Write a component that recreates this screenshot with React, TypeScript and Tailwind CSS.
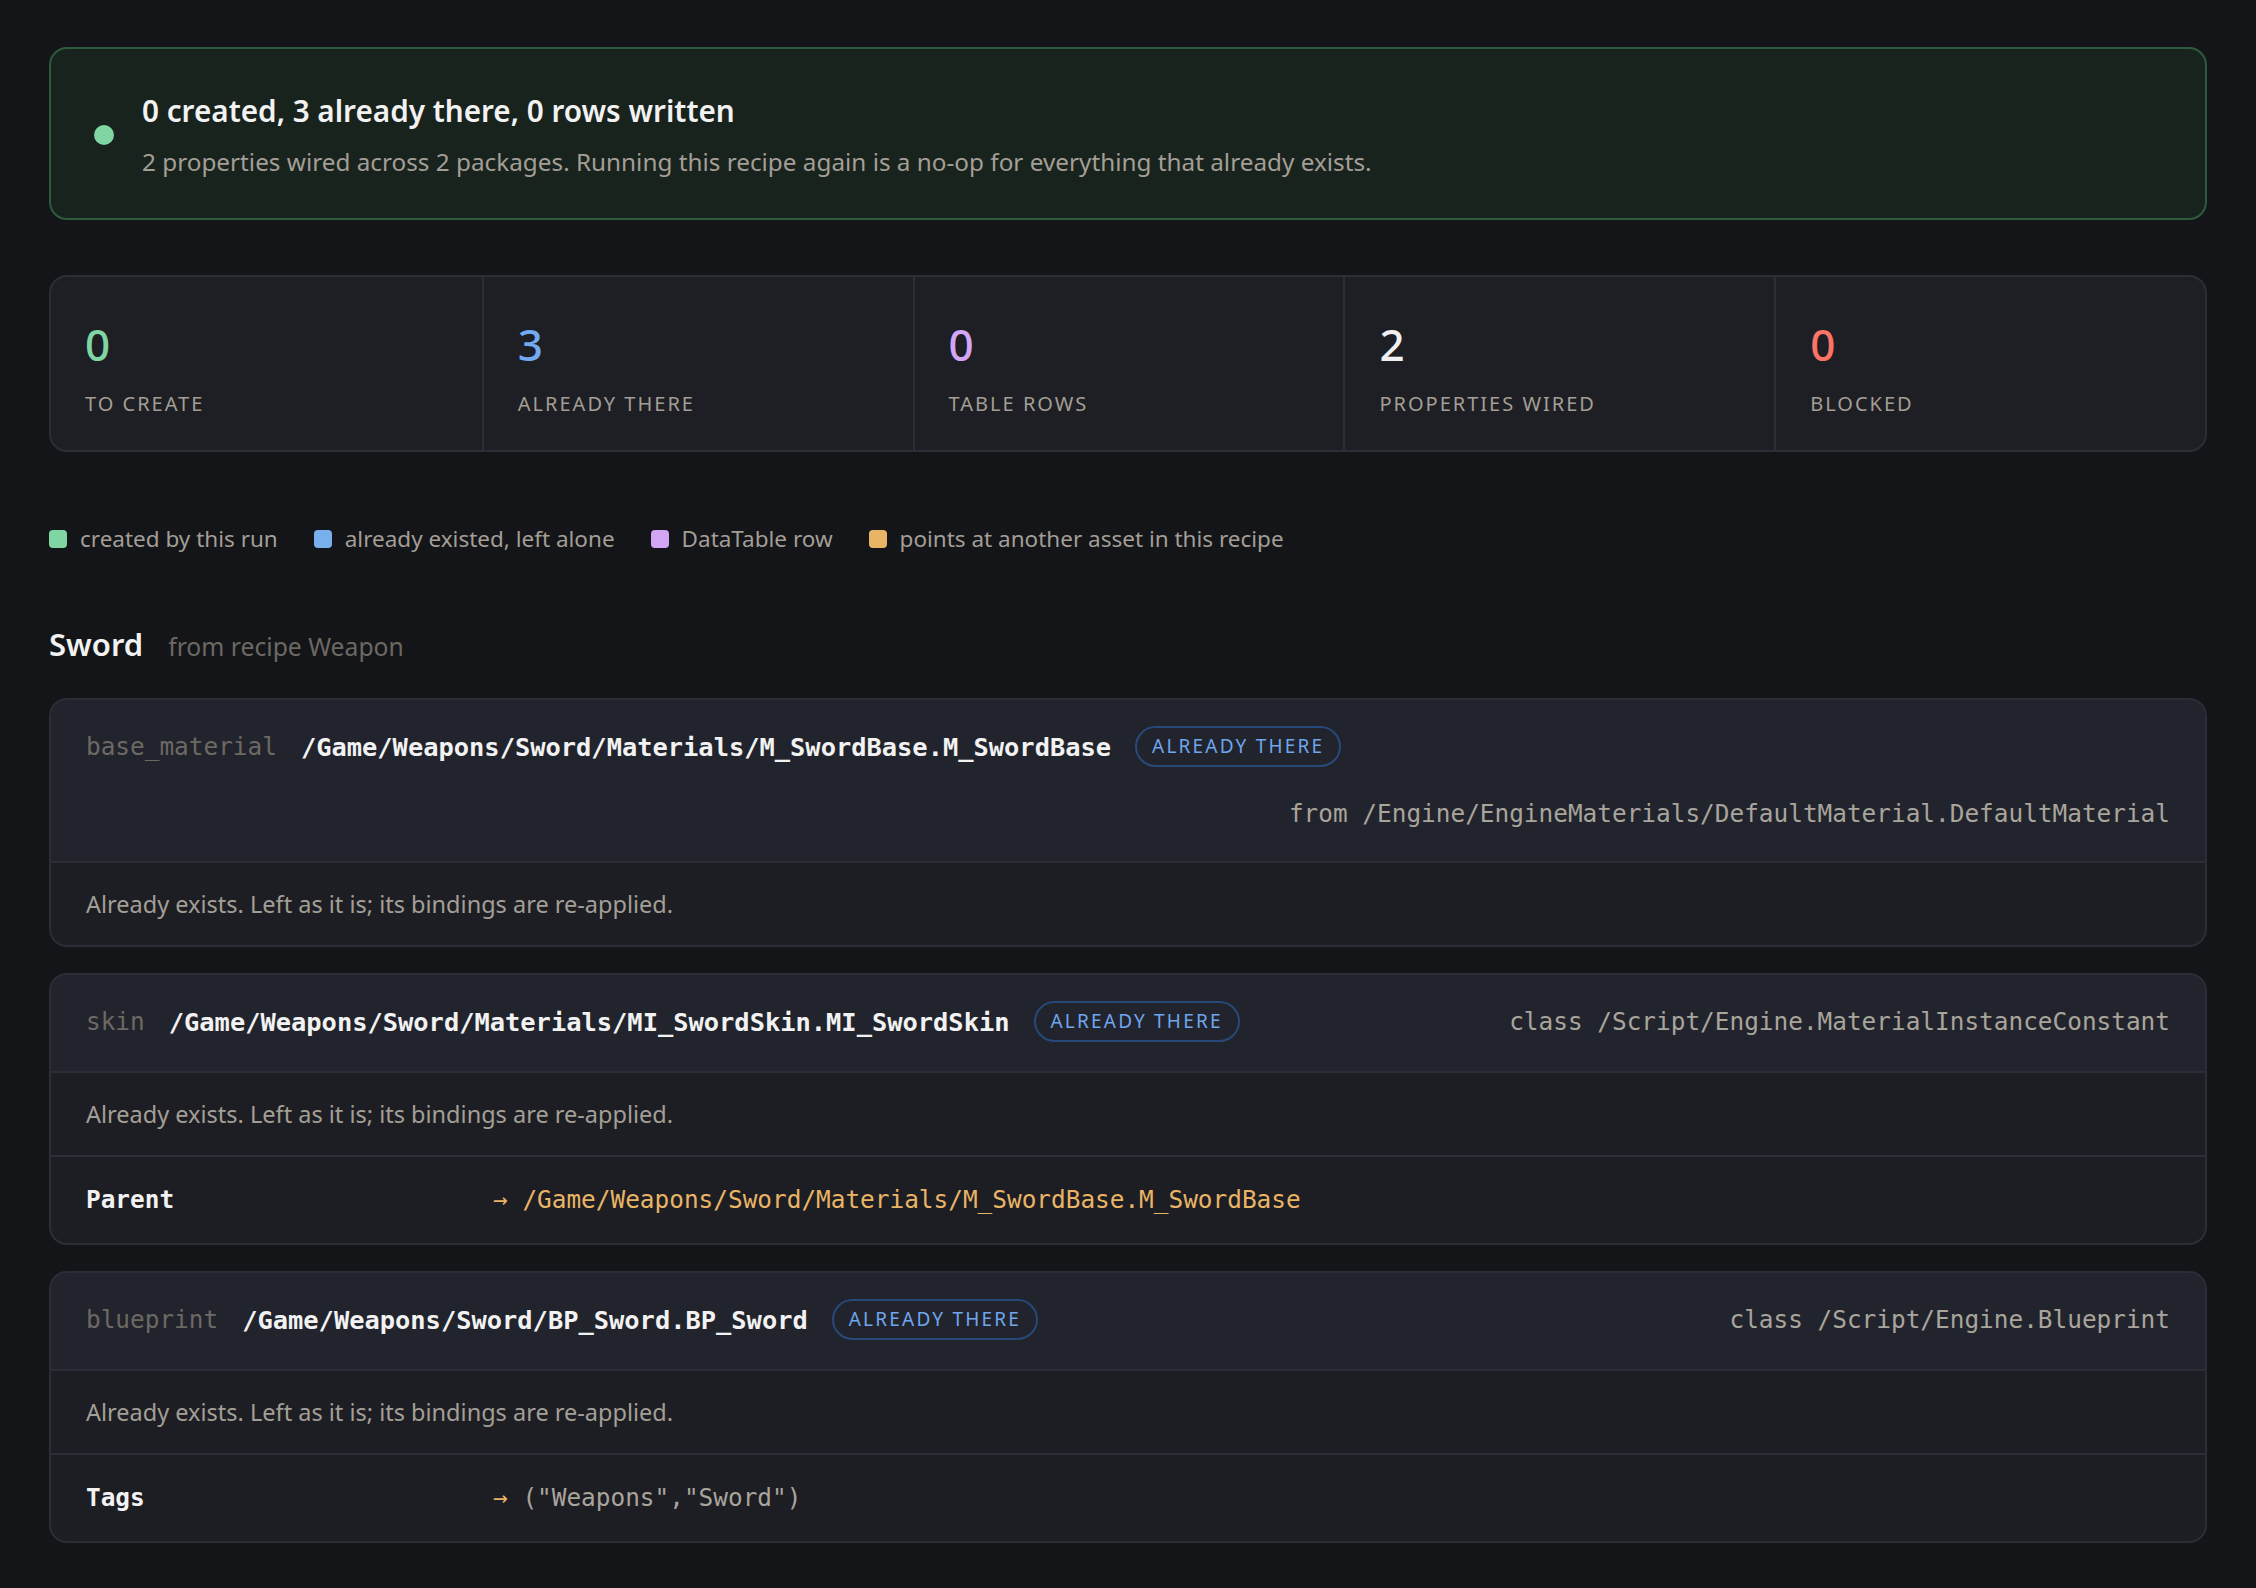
import React from "react";

type Binding = { label: string; arrow: string; value: string; tone: "ref" | "plain" };

type Asset = {
	kind: string;
	path: string;
	meta: string;
	note: string;
	bindings: Binding[];
};

const stats = [
	{ value: "0", label: "TO CREATE", color: "text-[#7fd6a2]" },
	{ value: "3", label: "ALREADY THERE", color: "text-[#72a9f1]" },
	{ value: "0", label: "TABLE ROWS", color: "text-[#d3a6f5]" },
	{ value: "2", label: "PROPERTIES WIRED", color: "text-[#f0f0f0]" },
	{ value: "0", label: "BLOCKED", color: "text-[#fb7466]" },
];

const legend = [
	{ label: "created by this run", color: "bg-[#7fd6a2]" },
	{ label: "already existed, left alone", color: "bg-[#78b0ee]" },
	{ label: "DataTable row", color: "bg-[#d3a6f5]" },
	{ label: "points at another asset in this recipe", color: "bg-[#e9b466]" },
];

const assets: Asset[] = [
	{
		kind: "base_material",
		path: "/Game/Weapons/Sword/Materials/M_SwordBase.M_SwordBase",
		meta: "from /Engine/EngineMaterials/DefaultMaterial.DefaultMaterial",
		note: "Already exists. Left as it is; its bindings are re-applied.",
		bindings: [],
	},
	{
		kind: "skin",
		path: "/Game/Weapons/Sword/Materials/MI_SwordSkin.MI_SwordSkin",
		meta: "class /Script/Engine.MaterialInstanceConstant",
		note: "Already exists. Left as it is; its bindings are re-applied.",
		bindings: [
			{
				label: "Parent",
				arrow: "→",
				value: "/Game/Weapons/Sword/Materials/M_SwordBase.M_SwordBase",
				tone: "ref",
			},
		],
	},
	{
		kind: "blueprint",
		path: "/Game/Weapons/Sword/BP_Sword.BP_Sword",
		meta: "class /Script/Engine.Blueprint",
		note: "Already exists. Left as it is; its bindings are re-applied.",
		bindings: [{ label: "Tags", arrow: "→", value: '("Weapons","Sword")', tone: "plain" }],
	},
];

const AssetCard = ({ asset }: { asset: Asset }) => (
	<div className="overflow-hidden rounded-[18px] border-2 border-[#2b2e37] bg-[#1d1e23]">
		{/* header: kind, path, status badge, class/source on the right */}
		<div className="flex flex-wrap items-center gap-x-[24px] gap-y-[29px] bg-[#22242d] px-[35px] pt-[26px] pb-[29px] font-['DejaVu_Sans_Mono',monospace]">
			<span className="text-[24.4px] leading-[36px] text-[#6c6963]">{asset.kind}</span>
			<span className="text-[25.4px] font-bold leading-[38px] text-[#f2f2f2]">{asset.path}</span>
			<span className="flex h-[41px] items-center rounded-full border-2 border-[#27497a] px-[15px] font-['Noto_Sans',sans-serif] text-[19px] tracking-[2.2px] text-[#6fa6ee]">
				ALREADY THERE
			</span>
			<span className="ml-auto text-[24.4px] leading-[36px] text-[#a9a49c]">{asset.meta}</span>
		</div>

		<div className="border-t-2 border-[#2b2e37] px-[35px] py-[24px] text-[23.5px] leading-[34px] text-[#a39e96]">
			{asset.note}
		</div>

		{asset.bindings.map((b) => (
			<div
				key={b.label}
				className="flex items-center border-t-2 border-[#2b2e37] px-[35px] py-[25px] font-['DejaVu_Sans_Mono',monospace] text-[24.4px] leading-[36px]"
			>
				<span className="w-[407px] shrink-0 font-bold text-[#f2f2f2]">{b.label}</span>
				<span className="text-[#e9b466]">{b.arrow}&nbsp;</span>
				<span className={b.tone === "ref" ? "text-[#e9b466]" : "text-[#a9a49c]"}>{b.value}</span>
			</div>
		))}
	</div>
);

export default function App() {
	return (
		<div className="min-h-screen bg-[#141519] px-[49px] pt-[47px] pb-[48px] font-['Noto_Sans',sans-serif]">
			{/* Summary banner */}
			<div className="flex items-center gap-[28px] rounded-[18px] border-2 border-[#2e5b3e] bg-[#19231d] px-[43px] pt-[41px] pb-[38px]">
				<span className="h-[20px] w-[20px] shrink-0 rounded-full bg-[#7fd6a2]" />
				<div className="flex flex-col gap-[12px]">
					<div className="text-[29.7px] font-semibold leading-[42px] text-[#f2f2f2]">
						0 created, 3 already there, 0 rows written
					</div>
					<div className="text-[24.3px] leading-[36px] text-[#a39e96]">
						2 properties wired across 2 packages. Running this recipe again is a no-op for
						everything that already exists.
					</div>
				</div>
			</div>

			{/* Stat counters */}
			<div className="mt-[55px] grid grid-cols-5 overflow-hidden rounded-[18px] border-2 border-[#2b2e37] bg-[#1e1f24]">
				{stats.map((s, i) => (
					<div
						key={s.label}
						className={`flex flex-col px-[34px] pt-[41px] pb-[31px] ${i > 0 ? "border-l-2 border-[#2b2e37]" : ""}`}
					>
						<span className={`text-[44px] font-medium leading-[53px] ${s.color}`}>{s.value}</span>
						<span className="mt-[18px] text-[20px] leading-[30px] tracking-[2px] text-[#a39e96]">
							{s.label}
						</span>
					</div>
				))}
			</div>

			{/* Legend */}
			<div className="mt-[70px] flex items-center gap-[36px]">
				{legend.map((l) => (
					<div key={l.label} className="flex items-center gap-[13px]">
						<span className={`h-[18px] w-[18px] rounded-[4px] ${l.color}`} />
						<span className="text-[22.5px] leading-[33px] text-[#a39e96]">{l.label}</span>
					</div>
				))}
			</div>

			{/* Package */}
			<div className="mt-[68px] flex items-baseline gap-[25px]">
				<h2 className="text-[31px] font-semibold leading-[42px] text-[#f2f2f2]">Sword</h2>
				<span className="text-[24.7px] text-[#6c6963]">from recipe Weapon</span>
			</div>

			<div className="mt-[33px] flex flex-col gap-[26px]">
				{assets.map((a) => (
					<AssetCard key={a.kind} asset={a} />
				))}
			</div>
		</div>
	);
}
